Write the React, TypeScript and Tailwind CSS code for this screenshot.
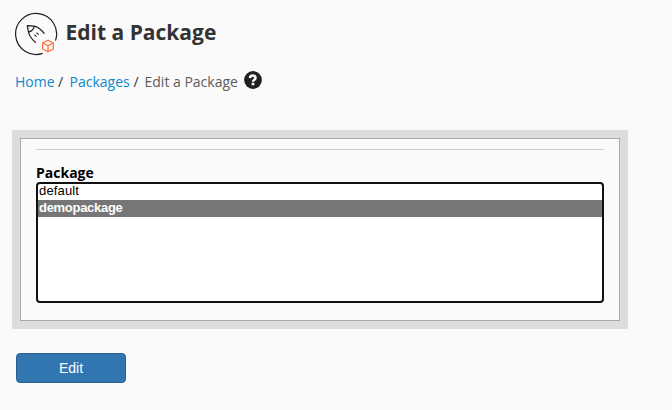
function PackageIcon() {
  return (
    <svg width="44" height="44" viewBox="14 12 44 44" fill="none" strokeLinejoin="round" className="shrink-0">
      <path d="M42.6 53.4A20.5 20.5 0 1 1 55.5 40.6" stroke="#202020" strokeWidth="1.2" />
      <path d="M35.8 42.8C31.5 39 29.2 36 28.5 32L27.3 25.6L34 26.1C38 26.8 41.3 29.6 44.5 33.7M28.7 32.2C31.5 31.3 33.8 29.5 34.3 26.2" stroke="#202020" strokeWidth="1.25" />
      <path d="M34.4 34.6L36.5 36.7M36.5 32.6L38.6 34.7" stroke="#202020" strokeWidth="1.1" />
      <path d="M48 40.3L53.3 43V49L48 51.8L42.6 49V43ZM42.6 43L48 45.8L53.3 43M48 45.8V51.8" stroke="#ff6c37" strokeWidth="1.2" />
    </svg>
  );
}

function HelpIcon() {
  return (
    <svg width="18" height="18" viewBox="0 0 18 18" className="absolute left-[244px] top-0">
      <circle cx="9" cy="9" r="8.9" fill="#231f20" />
      <path d="M6 7.1C6.1 3.7 11.5 3.8 11.5 6.9C11.5 8.8 9 8.6 9 10.8" fill="none" stroke="#fafafa" strokeWidth="2.6" />
      <rect x="7.6" y="11.8" width="2.8" height="2.5" fill="#fafafa" />
    </svg>
  );
}

export default function App() {
  return (
    <main className="h-[410px] w-[672px] overflow-hidden bg-[#fafafa] pt-3 font-['Open_Sans',sans-serif] text-[#333]">
      <header className="flex h-11 items-center pl-3.5">
        <PackageIcon />
        <h1 className="ml-[7.5px] -mt-1 text-[21px] leading-[30px] font-bold whitespace-nowrap">Edit a Package</h1>
      </header>
      <nav className="relative mt-[15px] flex h-[22px] text-sm leading-[22px] whitespace-nowrap">
        <a className="ml-[15px] w-[43px] text-[#1087cf]">Home</a>
        <span className="w-[11.5px]">/</span>
        <a className="w-[64px] text-[#1087cf]">Packages</a>
        <span className="w-[11px]">/</span>
        <span className="text-[#5c5c5c]">Edit a Package</span>
        <HelpIcon />
      </nav>
      <section className="mt-[37px] ml-3 h-[199px] w-[616px] border-8 border-[#ddd]">
        <div className="h-full border border-[#aaa] px-[15px] pt-2.5">
          <hr className="border-[#ccc]" />
          <label className="mt-[13px] block h-[19px] text-sm leading-[19px] font-bold text-black">Package</label>
          <div role="listbox" className="h-[121px] rounded-[4px] border-2 border-[#101010] bg-white font-['Liberation_Sans',Arial,sans-serif] text-[13px] text-black">
            <div role="option" className="h-4 pl-px leading-[14px] tracking-[0.15px]">default</div>
            <div role="option" className="h-[17px] bg-[#767676] pl-px leading-4 font-bold tracking-[-0.29px] text-white">demopackage</div>
          </div>
        </div>
      </section>
      <button className="mt-6 ml-4 block h-[30px] w-[110px] rounded-[4px] border border-[#285f8f] bg-[#3276b1] font-['Liberation_Sans',Arial,sans-serif] text-sm text-white">Edit</button>
    </main>
  );
}
